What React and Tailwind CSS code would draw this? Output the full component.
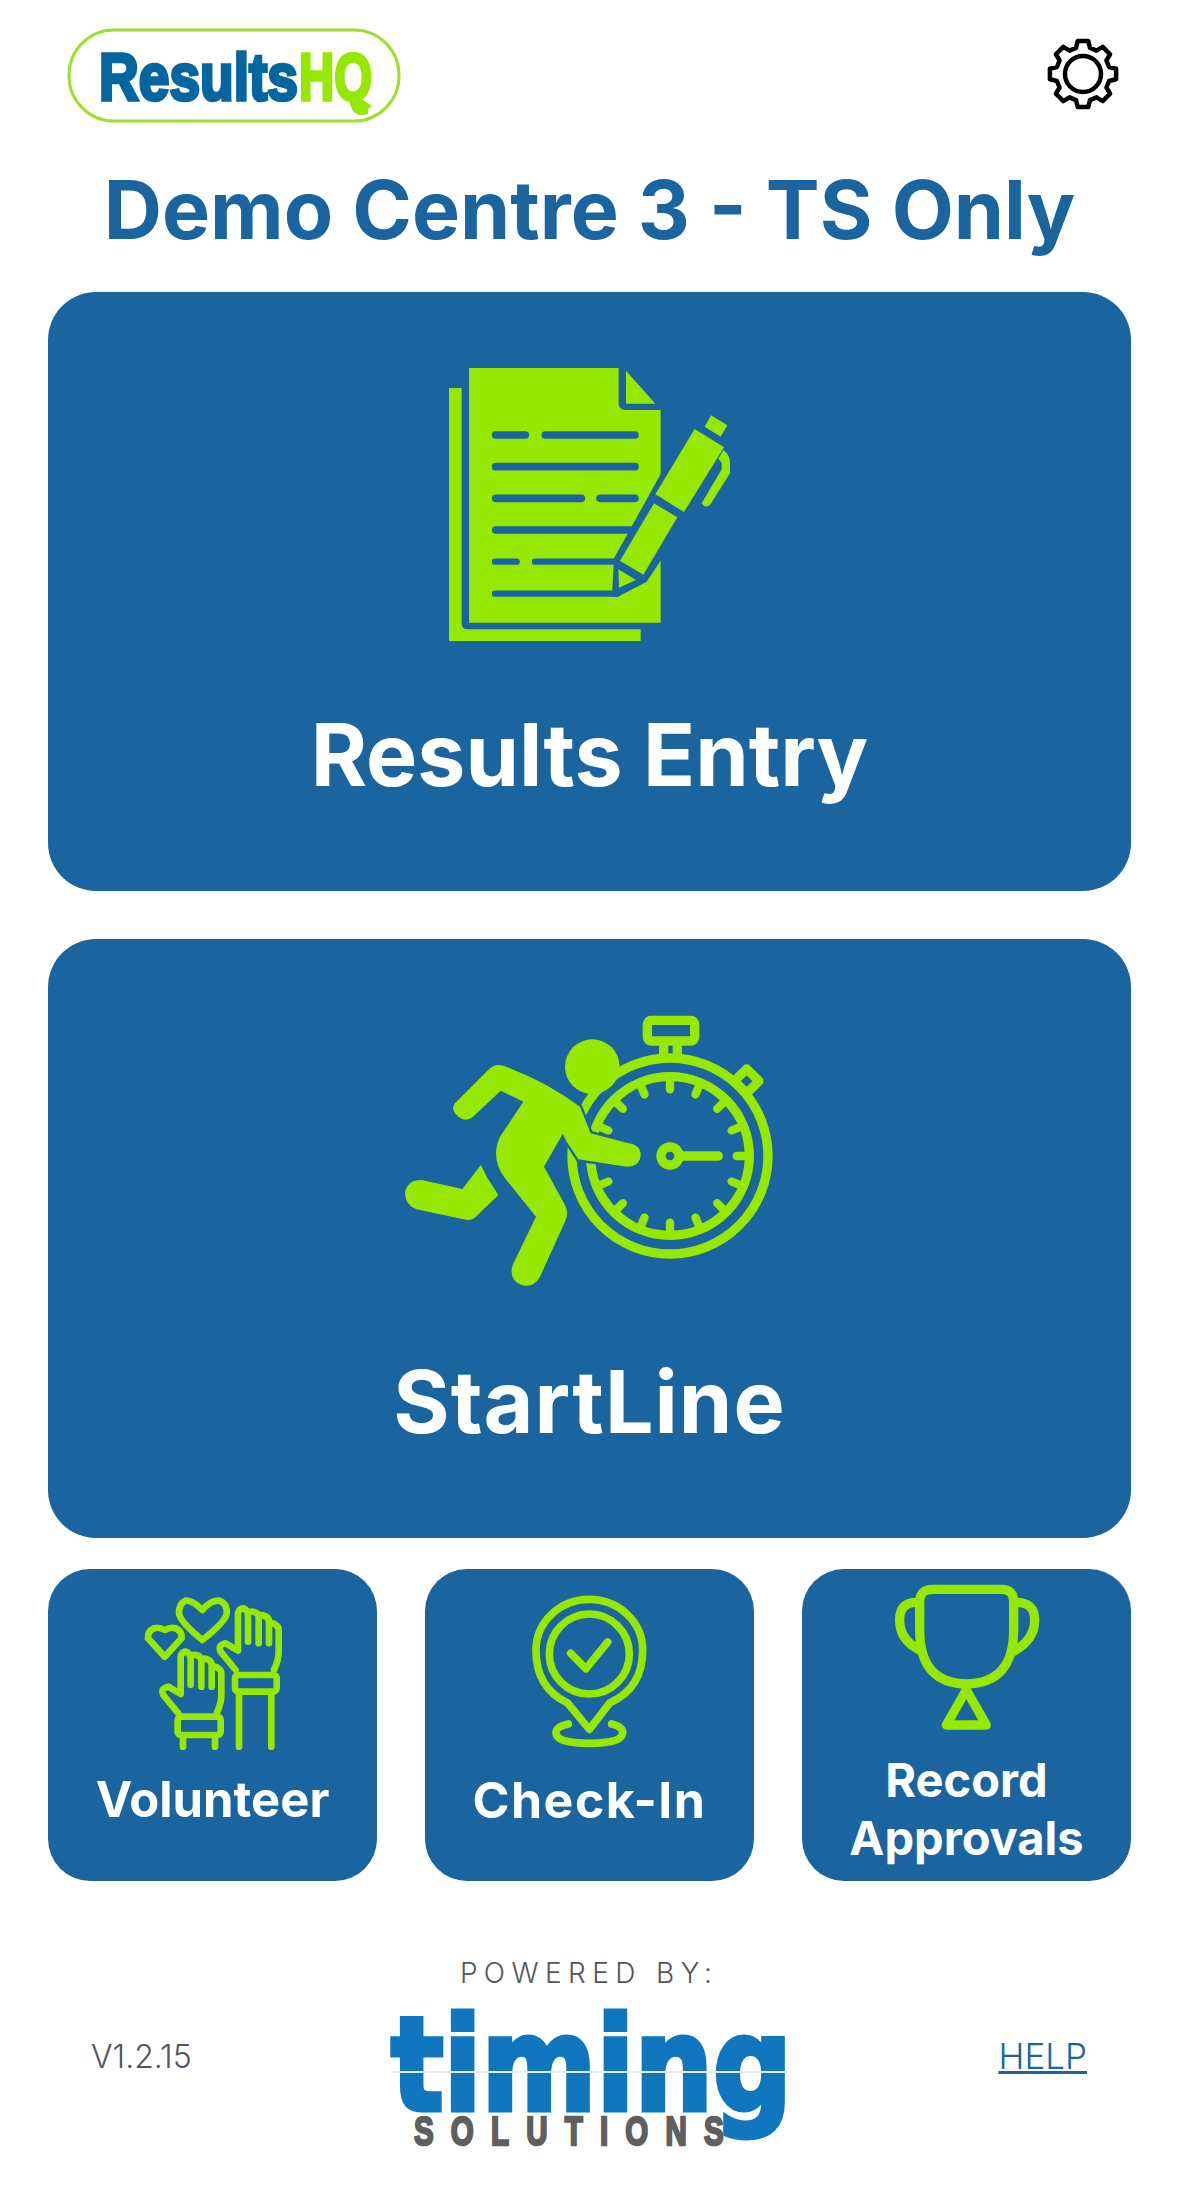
import React from "react";

const BLUE = "#1a659f";
const GREEN = "#97e800";

const gearPath = () => {
  const pts = [];
  for (let i = 0; i < 8; i++) {
    const a = (i * 45 - 90) * (Math.PI / 180);
    const p = (r, d) => {
      const t = a + (d * Math.PI) / 180;
      return `${(36 + r * Math.cos(t)).toFixed(2)} ${(36 + r * Math.sin(t)).toFixed(2)}`;
    };
    pts.push(p(27, -15), p(33.5, -9), p(33.5, 9), p(27, 15));
  }
  return "M" + pts.join(" L") + " Z";
};

const ResultsLogo = () => (
  <svg width="334" height="95" viewBox="0 0 334 95">
    <rect x="2" y="2" width="330" height="91" rx="45" fill="#fff" stroke="#9be22d" strokeWidth="3" />
    <text x="32" y="72" fontSize="66" textLength="199" lengthAdjust="spacingAndGlyphs" fill="#04659f" stroke="#04659f" strokeWidth="3.5" className="font-['Liberation_Sans'] font-bold">
      Results
    </text>
    <text x="232" y="72" fontSize="66" textLength="73" lengthAdjust="spacingAndGlyphs" fill={GREEN} stroke={GREEN} strokeWidth="3.5" className="font-['Liberation_Sans'] font-bold">
      HQ
    </text>
    <path d="M287 66 L305 78 L297 84 L281 72 Z" fill={GREEN} />
  </svg>
);

const Gear = () => (
  <svg className="mb-[3px]" width="72" height="72" viewBox="0 0 72 72" fill="none" stroke="#000" strokeWidth="4.5" strokeLinejoin="round">
    <path d={gearPath()} />
    <circle cx="36" cy="36" r="18" />
  </svg>
);

const DocIcon = () => (
  <svg width="380" height="320" viewBox="0 0 1140 960">
    <path d="M147 144 H185 V850 Q185 868 203 868 H722 V903 H147 Z" fill={GREEN} />
    <path d="M207 84 H656 V190 Q656 210 676 210 H782 V848 H207 Z" fill={GREEN} />
    <path d="M678 92 L766 191 H678 Z" fill={GREEN} />
    <g stroke={BLUE} strokeLinecap="round" strokeWidth="23" fill="none">
      <path d="M287 285 H376 M436 285 H705 M287 380 H705 M287 475 H544 M600 475 H705 M287 570 H700" />
      <path strokeWidth="19" d="M285 665 H350 M405 665 H645 M285 761 H650" />
    </g>
    <path d="M800 370 L642 655 L636 770 H654 L740 725 L800 635 Z" fill={BLUE} />
    <path d="M884 267 L972 322 L852 516 L766 463 Z" fill={GREEN} />
    <path d="M762 490 L832 532 L730 704 L660 662 Z" fill={GREEN} />
    <path d="M655 688 L708 720 L657 743 Z" fill={GREEN} />
    <path d="M933 226 L982 256 L962 290 L914 260 Z" fill={GREEN} />
    <path d="M970 330 Q990 345 990 368 V400 L932 492 Q918 508 905 490 L965 388 V368 L955 356 Z" fill={GREEN} />
  </svg>
);

const RunnerIcon = () => {
  const ticks = [0, 22.5, 45, 67.5, 90, 112.5, 135, 157.5, 180, 202.5, 225, 247.5, 292.5, 315, 337.5];
  const body =
    "M225 310 L330 205 Q345 190 370 197 Q500 245 600 320 L632 400 L745 430 Q782 435 782 465 Q780 500 740 500 L595 478 L560 425 L548 402 L492 500 L555 615 Q568 640 555 665 L480 830 Q460 865 425 855 Q385 840 398 795 L468 650 L375 535 Q330 475 360 410 L430 305 L362 272 L285 345 Q260 370 235 350 Q210 330 225 310 Z";
  return (
    <svg width="420" height="310" viewBox="0 0 1260 930">
      <g fill="none" stroke={GREEN} strokeWidth="28" strokeLinecap="round" strokeLinejoin="round">
        <circle cx="870" cy="468" r="294" />
        <circle cx="870" cy="468" r="238" />
        <rect x="802" y="61" width="142" height="62" rx="12" />
        <path d="M851 130 V170 M892 130 V170" />
        <path d="M1100 207 L1137 243 L1100 280 L1063 243 Z" />
        <g strokeWidth="25">
          {ticks.map((t) => (
            <line key={t} x1="870" y1="240" x2="870" y2="268" transform={`rotate(${t} 870 468)`} />
          ))}
        </g>
        <circle cx="870" cy="468" r="27" />
        <path d="M900 468 H1015" />
      </g>
      <path d={body} fill={BLUE} stroke={BLUE} strokeWidth="14" />
      <circle cx="637" cy="200" r="82" fill={GREEN} />
      <path d={body} fill={GREEN} />
      <path d="M75 580 Q80 540 125 540 L247 567 L303 495 L320 530 L355 585 L290 648 Q275 665 250 658 L110 628 Q75 615 75 580 Z" fill={GREEN} />
    </svg>
  );
};

const handPath =
  "M345 270 L300 215 Q290 195 315 190 L352 212 V100 Q355 85 368 85 Q380 88 382 105 V185 M382 105 Q385 92 398 95 Q414 98 414 112 V190 M414 112 Q420 102 432 108 Q445 112 445 125 V190 M445 135 Q455 125 465 135 Q474 140 474 150 V215 Q474 240 460 270";

const HandsIcon = () => (
  <svg width="200" height="180" viewBox="-23 0 600 540" fill="none" stroke={GREEN} strokeWidth="20" strokeLinecap="round" strokeLinejoin="round">
    <path d="M245 90 Q215 60 195 62 Q175 70 175 100 Q178 125 245 180 Q315 125 318 100 Q320 70 295 62 Q270 60 245 90 Z" />
    <path d="M132 150 Q115 140 100 145 Q80 155 82 175 L132 230 L183 175 Q185 155 165 145 Q150 140 132 150 Z" />
    <path d={handPath} />
    <rect x="343" y="285" width="125" height="50" rx="10" />
    <path d="M355 340 V500 M452 340 V500" />
    <path d={handPath} transform="translate(-172 130)" />
    <rect x="171" y="410" width="129" height="55" rx="10" />
    <path d="M187 470 V500 M283 470 V500" />
  </svg>
);

const PinIcon = () => (
  <svg width="160" height="180" viewBox="0 0 480 540" fill="none" stroke={GREEN} strokeWidth="23" strokeLinecap="round" strokeLinejoin="round">
    <path d="M238 448 L172 368 Q78 325 78 210 A160 152 0 0 1 398 210 Q398 325 300 368 Z" />
    <circle cx="238" cy="222" r="120" />
    <path d="M182 220 L228 266 L293 186" />
    <path d="M175 432 Q138 440 138 458 Q138 490 238 490 Q338 490 338 458 Q338 440 305 432" />
  </svg>
);

const TrophyIcon = () => (
  <svg width="180" height="170" viewBox="22 0 540 510" fill="none" stroke={GREEN} strokeWidth="28" strokeLinecap="round" strokeLinejoin="round">
    <path d="M150 95 Q150 58 190 58 H395 Q432 58 432 95 V180 Q432 340 290 342 Q150 340 150 180 Z" />
    <path d="M140 97 Q90 97 90 150 Q90 210 150 240" />
    <path d="M440 97 Q495 97 495 150 Q495 210 430 245" />
    <path d="M290 360 L350 465 H230 Z" />
  </svg>
);

const TimingLogo = () => (
  <svg className="mt-[-8px]" width="420" height="170" viewBox="0 -20 420 170">
    <text x="6" y="108" fontSize="130" textLength="401" lengthAdjust="spacingAndGlyphs" fill="#1076bd" stroke="#1076bd" strokeWidth="5" className="font-['DejaVu_Sans'] font-bold">
      timing
    </text>
    <rect x="6" y="69" width="397" height="2" fill="#e3eef7" />
    <g transform="translate(29 143) scale(0.72 1)">
      <text x="0" y="0" fontSize="41" textLength="430" fill="#5f5f5f" stroke="#5f5f5f" strokeWidth="2.5" className="font-['Liberation_Sans'] font-bold">
        SOLUTIONS
      </text>
    </g>
  </svg>
);

const BigCard = ({ icon, label, pad, gap }) => (
  <div className={`bg-[#1a659f] rounded-[48px] h-[599px] flex flex-col items-center ${pad}`}>
    {icon}
    <div className={`text-white font-bold text-[86px] leading-[100px] ${gap}`}>{label}</div>
  </div>
);

const SmallCard = ({ icon, label, pad, text }) => (
  <div className={`bg-[#1a659f] rounded-[42px] h-[312px] flex flex-col items-center ${pad}`}>
    {icon}
    <div className={`text-white font-bold leading-[58px] text-center mt-[11px] ${text}`}>{label}</div>
  </div>
);

const App = () => {
  return (
    <div className="w-[1179px] min-h-[2208px] bg-white font-['Inter',sans-serif]">
      <div className="flex justify-between items-center pl-[67px] pr-[60px] pt-[28px]">
        <ResultsLogo />
        <Gear />
      </div>

      <h1 className="text-center text-[#1a659f] font-bold text-[80.7px] leading-[96px] mt-[39px]">
        Demo Centre 3 - TS Only
      </h1>

      <div className="px-[48px] mt-[34px] flex flex-col">
        <BigCard icon={<DocIcon />} label="Results Entry" pad="pt-[48px]" gap="mt-[45px]" />
        <div className="mt-[48px]">
          <BigCard icon={<RunnerIcon />} label="StartLine" pad="pt-[61px]" gap="mt-[42px] tracking-[1px]" />
        </div>
        <div className="grid grid-cols-3 gap-[48px] mt-[31px]">
          <SmallCard icon={<HandsIcon />} label="Volunteer" pad="pt-[11px]" text="text-[49px]" />
          <SmallCard icon={<PinIcon />} label="Check-In" pad="pt-[11px]" text="text-[50px] tracking-[1.5px]" />
          <SmallCard
            icon={<TrophyIcon />}
            label={
              <>
                Record
                <br />
                Approvals
              </>
            }
            pad="pt-[1px]"
            text="text-[47px]"
          />
        </div>
      </div>

      <div className="flex justify-between items-end pl-[91px] pr-[92px] mt-[75px]">
        <div className="text-[32px] leading-[36px] font-light text-[#555] mb-[77px]">V1.2.15</div>
        <div className="flex flex-col items-center">
          <div className="text-[28px] leading-[34px] font-light tracking-[6.4px] text-[#555] mr-[12px]">POWERED BY:</div>
          <TimingLogo />
        </div>
        <a className="text-[35px] leading-[40px] font-light text-[#1a659f] underline mb-[76px]">HELP</a>
      </div>
    </div>
  );
};

export default App;
